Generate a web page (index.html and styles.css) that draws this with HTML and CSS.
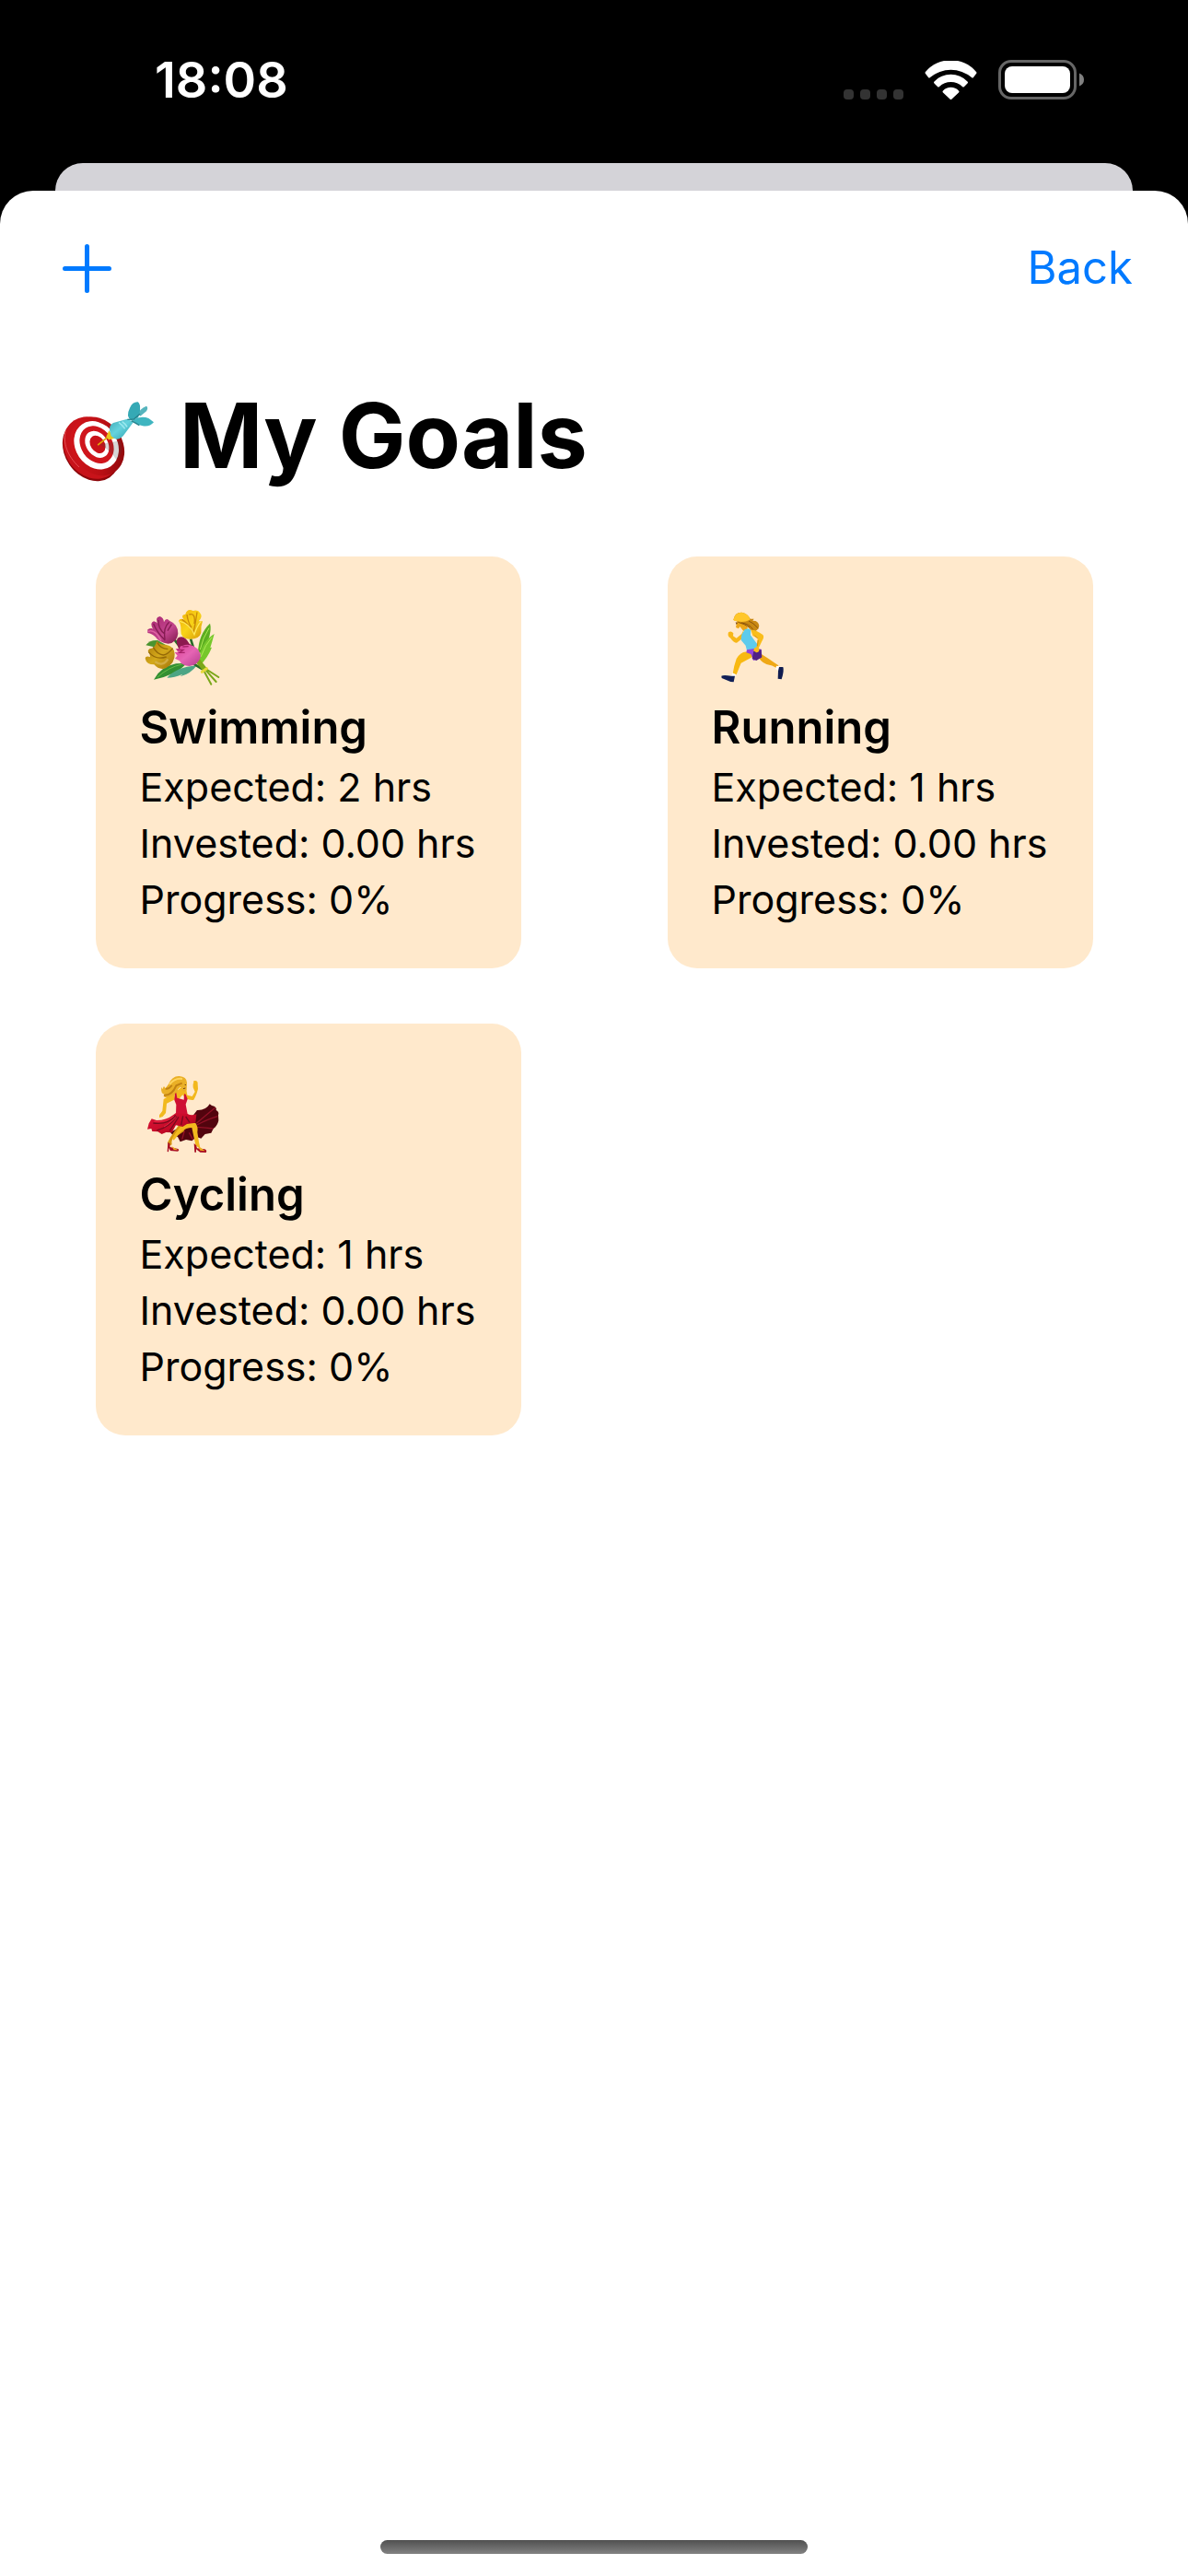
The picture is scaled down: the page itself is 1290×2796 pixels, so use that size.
FILE: index.html
```html
<!DOCTYPE html>
<html lang="en">
<head>
<meta charset="utf-8">
<meta name="viewport" content="width=device-width, initial-scale=1">
<title>My Goals</title>
<link rel="stylesheet" href="styles.css">
</head>
<body>
<div class="status-bar">
  <time class="clock">18:08</time>
  <div class="indicators">
    <div class="signal"><i></i><i></i><i></i><i></i></div>
    <svg class="wifi" viewBox="0 0 57 42" aria-hidden="true">
      <path d="M1 12A36 36 0 0 1 56 12Q57 13 56 14L53 18Q52 19 51 18A35 35 0 0 0 6 18Q5 19 4 18L1 14Q0 13 1 12Z"/>
      <path d="M10.500 22.500A25 25 0 0 1 46.500 22.500Q47.500 23.500 46.500 24.500L43 28Q42 29 41 28A18.400 18.400 0 0 0 16 28Q15 29 14 28L10.500 24.500Q9.500 23.500 10.500 22.500Z"/>
      <path d="M20 32.500A11.500 11.500 0 0 1 37 32.500Q38 33.500 37 34.500L29.500 41.500Q28.500 42.500 27.500 41.500L20 34.500Q19 33.500 20 32.500Z"/>
    </svg>
    <svg class="battery" viewBox="0 0 94 43" aria-hidden="true">
      <rect x="1.500" y="1.500" width="82" height="40" rx="12.500" fill="none" stroke="#666" stroke-width="3"/>
      <rect x="7" y="7" width="71" height="29" rx="8" fill="#fff"/>
      <path d="M88 14.500Q93 16.500 93 21.500T88 28.500Z" fill="#808080"/>
    </svg>
  </div>
</div>
<div class="backdrop"></div>
<main class="sheet">
  <nav class="toolbar">
    <button class="tool" type="button" aria-label="Add goal">
      <svg class="plus" viewBox="0 0 53 53" aria-hidden="true"><path d="M26.500 2.500V50.500M2.500 26.500H50.500"/></svg>
    </button>
    <button class="tool" type="button">Back</button>
  </nav>
  <h1 class="title">
    <svg class="target" viewBox="45 75 306 264" aria-hidden="true">
      <defs>
        <linearGradient id="rim" x1="0" y1="0" x2="1" y2="1"><stop offset="0" stop-color="#d9161c"/><stop offset=".6" stop-color="#b80f14"/><stop offset="1" stop-color="#7c0508"/></linearGradient>
        <linearGradient id="barrel" x1="0" y1="0" x2="1" y2="1"><stop offset="0" stop-color="#3fa9b5"/><stop offset=".45" stop-color="#66d3de"/><stop offset="1" stop-color="#279aa8"/></linearGradient>
      </defs>
      <ellipse cx="147" cy="235" rx="86" ry="108" transform="rotate(-34 147 235)" fill="#8d070b"/>
      <ellipse cx="150" cy="228" rx="88" ry="107" transform="rotate(-34 150 228)" fill="#c8131a"/>
      <path d="M64 172C54 210 68 254 108 291" fill="none" stroke="#ef686c" stroke-width="3" opacity=".7"/>
      <ellipse cx="167" cy="223" rx="82" ry="101" transform="rotate(-34 167 223)" fill="url(#rim)"/>
      <ellipse cx="164" cy="220" rx="68" ry="83" transform="rotate(-34 164 220)" fill="#fff"/>
      <ellipse cx="165" cy="218" rx="51" ry="65" transform="rotate(-34 165 218)" fill="#cf151c"/>
      <ellipse cx="166" cy="217" rx="35" ry="47" transform="rotate(-34 166 217)" fill="#fff"/>
      <ellipse cx="168" cy="217" rx="23" ry="31" transform="rotate(-34 168 217)" fill="#c91219"/>
      <path d="M174 217L242 205Q254 248 230 268Q208 235 174 217Z" fill="#444" opacity=".22"/>
      <path d="M170 218L209 187" stroke="#e0a90a" stroke-width="5" stroke-linecap="round"/>
      <path d="M196 192L205 172L224 197L204 202Z" fill="#e9c51a"/>
      <path d="M301 116Q304 102 327 92Q334 97 327 109L307 125Z" fill="#55b4bd"/>
      <path d="M278 138Q258 128 273 98Q282 78 299 79Q308 84 306 108L300 130Z" fill="#35a9b5"/>
      <path d="M207 171Q205 155 219 147L265 134L285 144L251 190Q231 210 212 190Z" fill="url(#barrel)"/>
      <path d="M237 146Q250 155 257 166M248 143Q259 151 264 160" fill="none" stroke="#9be8ef" stroke-width="5"/>
      <path d="M280 138Q310 122 334 132L351 145Q338 161 315 157Q292 151 280 138Z" fill="#3fb5c0"/>
      <path d="M265 136L286 135L306 118M278 140L304 155" fill="none" stroke="#26818c" stroke-width="4"/>
    </svg>
    <span>My Goals</span>
  </h1>
  <section class="goals">
    <article class="card">
      <svg class="emoji" viewBox="33 45 270 270" aria-hidden="true">
        <defs>
          <linearGradient id="gold" x1="0" y1="0" x2="1" y2="1"><stop offset="0" stop-color="#a97708"/><stop offset=".5" stop-color="#d4a91b"/><stop offset="1" stop-color="#a17208"/></linearGradient>
          <linearGradient id="yellow" x1="0" y1="0" x2="1" y2="1"><stop offset="0" stop-color="#efae0b"/><stop offset=".5" stop-color="#f8d318"/><stop offset="1" stop-color="#d89a08"/></linearGradient>
          <linearGradient id="plum" x1="0" y1="0" x2="1" y2="1"><stop offset="0" stop-color="#a5246d"/><stop offset=".6" stop-color="#c4458e"/><stop offset="1" stop-color="#7e1648"/></linearGradient>
          <linearGradient id="pink" x1="0" y1="0" x2="1" y2="1"><stop offset="0" stop-color="#d83b90"/><stop offset=".5" stop-color="#e665b4"/><stop offset="1" stop-color="#b63d8f"/></linearGradient>
        </defs>
        <path d="M52 166Q65 148 91 150L118 166L90 174Z" fill="#4b9430"/>
        <path d="M78 278Q100 236 150 226L187 224Q150 263 78 278Z" fill="#328f32"/>
        <path d="M90 270Q125 238 170 228" fill="none" stroke="#64bb45" stroke-width="3"/>
        <path d="M121 272Q150 238 218 232Q198 260 164 268L172 260Q145 272 121 272Z" fill="#4ca584"/>
        <path d="M222 190Q224 130 261 95Q270 126 238 192Z" fill="#5cad21"/>
        <path d="M226 214Q230 157 275 129Q268 155 262 174L267 173Q254 206 230 230Z" fill="#76c72b"/>
        <path d="M231 204Q246 163 267 140M229 180Q237 143 258 110" fill="none" stroke="#aceb54" stroke-width="3"/>
        <path d="M198 145L218 210L238 243M143 145L205 225L238 245" fill="none" stroke="#286b28" stroke-width="8"/>
        <path d="M214 216Q232 236 241 249L265 293M222 218Q240 240 250 250L281 285M226 213Q242 235 252 246L289 270" fill="none" stroke="#7ba719" stroke-width="6" stroke-linecap="round"/>
        <path d="M235 253L250 242" stroke="#e6d83a" stroke-width="9" stroke-linecap="round"/>
        <path d="M58 115Q72 107 76 115Q63 93 78 88Q90 91 94 101Q78 76 98 72Q110 76 111 91Q118 74 129 86Q158 98 157 128Q154 157 125 161Q95 158 83 139Q73 128 58 126Z" fill="url(#plum)"/>
        <path d="M77 96Q89 126 115 150M93 84Q91 113 115 130M128 91Q108 108 114 147M136 98L123 119" fill="none" stroke="#851c52" stroke-width="4"/>
        <path d="M60 121Q82 112 102 151" fill="none" stroke="#df64a4" stroke-width="4"/>
        <path d="M159 87Q164 76 177 83Q163 68 181 65Q187 45 206 54Q222 49 230 63Q238 73 224 88L237 88Q230 106 232 126Q226 147 194 146Q164 144 166 116Q167 98 159 87Z" fill="url(#yellow)"/>
        <path d="M170 82Q190 95 207 124Q213 100 219 58M186 66Q189 91 201 108M193 66Q215 59 210 96" fill="none" stroke="#c98a08" stroke-width="4"/>
        <path d="M162 88Q194 94 210 131Q219 102 232 88" fill="none" stroke="#ffe85c" stroke-width="4"/>
        <path d="M62 190Q55 184 65 177Q81 178 88 152Q98 165 117 164Q145 169 146 194Q148 223 117 241Q95 248 79 229Q54 229 50 209Q51 199 66 204Q66 198 62 190Z" fill="url(#gold)"/>
        <path d="M76 172Q88 195 109 198Q123 197 140 176M90 158Q101 179 124 178M61 188Q84 216 119 204" fill="none" stroke="#956907" stroke-width="4"/>
        <path d="M82 220Q108 237 124 211" fill="none" stroke="#d7b757" stroke-width="7" opacity=".7"/>
        <path d="M154 162Q148 140 168 139Q182 140 194 161L204 168L160 181Z" fill="#8d194f"/>
        <path d="M146 189L157 188L149 177L163 177Q160 169 171 168Q188 160 207 169Q231 181 230 205Q223 231 194 234Q169 233 162 217L147 209L155 200Z" fill="url(#pink)"/>
        <path d="M154 181L174 181L162 190L179 190M172 171L191 170" fill="none" stroke="#a72369" stroke-width="4"/>
      </svg>
      <h2 class="name">Swimming</h2>
      <p class="line">Expected: 2 hrs</p>
      <p class="line">Invested: 0.00 hrs</p>
      <p class="line">Progress: 0%</p>
    </article>
    <article class="card">
      <svg class="emoji" viewBox="36 45 270 270" aria-hidden="true">
        <path d="M151 188Q132 184 116 210Q107 235 104 259L116 262Q125 238 131 224L167 205L178 190Z" fill="#f8b912"/>
        <path d="M184 198Q194 221 214 228Q233 230 248 241L253 232Q236 221 222 211L194 193Z" fill="#efa816"/>
        <path d="M103 256L115 262L109 270L100 267ZM246 233L256 235L253 249L244 243Z" fill="#fff"/>
        <path d="M67 266Q74 262 99 266L111 266L107 286L97 285L68 273Z" fill="#102057"/>
        <path d="M255 237L268 237Q272 249 263 277L251 275L252 250Z" fill="#101c50"/>
        <path d="M118 88L114 108L123 112L127 105L139 120L153 111L145 91Z" fill="#eda719"/>
        <path d="M106 84Q110 59 132 59Q152 62 161 80L173 80L169 86Q188 85 190 103Q188 116 178 120L162 116L150 102L132 94L124 91L113 86Z" fill="#c98912"/>
        <path d="M106 83Q111 59 133 59Q157 63 160 83Q138 94 120 88L111 87Z" fill="#ffc72b"/>
        <path d="M121 91Q142 96 158 108M132 93Q158 96 170 115M156 87Q170 92 187 111" fill="none" stroke="#8c550b" stroke-width="3"/>
        <path d="M113 91L120 93L116 99Z" fill="#704014"/>
        <path d="M139 117L133 129L116 143L105 136L106 127Q99 118 90 124Q85 137 97 143Q107 158 117 158L135 144Z" fill="#f7b719"/>
        <path d="M143 115L154 112L163 116L162 133L184 163L181 183L150 183L146 167L131 149L133 132Z" fill="#5ecbec"/>
        <path d="M150 181L180 176L197 179L198 206L171 216L167 204L163 195L148 190Z" fill="#9244dc"/>
        <path d="M173 181L197 181L199 205L181 216L167 210Z" fill="#512184"/>
        <path d="M163 116Q181 116 202 132Q208 139 199 153L189 174Q194 189 181 190L171 184Q173 174 182 171L185 143L169 135Z" fill="#f9bd1b"/>
        <path d="M185 144L175 134M184 169L187 150" stroke="#d88d12" stroke-width="3"/>
      </svg>
      <h2 class="name">Running</h2>
      <p class="line">Expected: 1 hrs</p>
      <p class="line">Invested: 0.00 hrs</p>
      <p class="line">Progress: 0%</p>
    </article>
    <article class="card">
      <svg class="emoji" viewBox="33 51 270 270" aria-hidden="true">
        <defs>
          <linearGradient id="dress" x1="0" y1="0" x2="1" y2="1"><stop offset="0" stop-color="#dd1439"/><stop offset=".6" stop-color="#c30a27"/><stop offset="1" stop-color="#6d0715"/></linearGradient>
        </defs>
        <path d="M187 207L219 165Q248 166 260 145L267 150Q285 154 281 165Q292 171 288 181L289 199Q285 217 272 225L265 239L245 243L232 257L218 252L202 265L183 261L164 268L156 252L140 247L132 237Z" fill="#52040e"/>
        <path d="M217 208Q252 178 278 157M219 213Q254 194 286 185M219 220Q250 222 271 225M193 238L205 260M178 232L170 260" fill="none" stroke="#931126" stroke-width="4"/>
        <path d="M174 212Q184 220 175 235L144 255Q134 260 137 277L127 282L123 270Q131 253 143 237L159 214Z" fill="#d69711"/>
        <path d="M180 204L214 207Q223 219 220 237L225 269L229 287L215 282L207 246L202 222Q184 222 167 235L143 263L138 257Q157 223 180 204Z" fill="#f2b91e"/>
        <path d="M124 270L130 273L131 285L157 291Q163 296 156 299L132 297L127 288L126 301L122 300ZM209 273L216 279L219 289L244 292Q253 297 248 303L229 302L216 292L216 302L211 302Z" fill="#a80d23"/>
        <path d="M134 279L139 284L157 295L143 294ZM221 282L231 287L245 298L229 296Z" fill="#edad20"/>
        <path d="M145 110Q124 120 110 129L106 167L96 181L96 190L107 186L117 174L120 143L147 130Z" fill="#f1b91e"/>
        <path d="M165 92L184 98L187 116L203 120L212 105L206 91Q204 81 208 75Q205 68 213 69Q222 69 221 80L222 96Q216 119 208 131Q200 134 180 126L172 115L159 130L146 119L153 103Z" fill="#f2b81e"/>
        <path d="M126 80Q138 53 161 54Q185 56 186 75L185 99Q178 108 171 101L165 89L157 97Q153 117 141 116Q120 130 109 119L118 115Q98 113 103 90L107 97Q107 92 111 87L116 94Z" fill="#eab027"/>
        <path d="M116 95Q126 98 137 84M111 116Q137 118 151 85L170 77" fill="none" stroke="#c18112" stroke-width="6"/>
        <path d="M129 81Q147 59 171 63" fill="none" stroke="#ffd55f" stroke-width="6"/>
        <path d="M183 83L179 82M181 93L174 95" stroke="#754816" stroke-width="3"/>
        <path d="M147 111L151 108L154 125L176 131L177 112L182 113L188 129L182 146L188 178L150 178L151 147L145 132Z" fill="#cf1034"/>
        <path d="M150 174L188 177Q200 184 217 178L214 206L186 210L172 219L150 214L137 238L118 237L104 243L91 235L73 234L70 225L57 227L62 208L71 193L87 198Q119 198 142 180Z" fill="url(#dress)"/>
        <path d="M149 181Q124 214 76 207M153 185Q126 222 88 231M159 187L130 232M173 184L167 213M182 186L195 205" fill="none" stroke="#790a1d" stroke-width="4"/>
        <path d="M144 184Q119 206 79 202M151 187Q124 213 111 219" fill="none" stroke="#f43a55" stroke-width="2"/>
      </svg>
      <h2 class="name">Cycling</h2>
      <p class="line">Expected: 1 hrs</p>
      <p class="line">Invested: 0.00 hrs</p>
      <p class="line">Progress: 0%</p>
    </article>
  </section>
  <div class="home-indicator"></div>
</main>
</body>
</html>
```
FILE: styles.css
```css
* {
  box-sizing: border-box;
}

body {
  margin: 0;
  min-height: 100vh;
  display: flex;
  flex-direction: column;
  background: #000;
  color: #000;
  font-family: Inter, "Liberation Sans", sans-serif;
}

.status-bar {
  display: flex;
  align-items: center;
  justify-content: space-between;
  height: 177px;
  padding: 0 112px 4px 168px;
}

.clock {
  color: #fff;
  font-size: 54px;
  font-weight: 600;
  line-height: 64px;
}

.indicators {
  display: flex;
  align-items: flex-end;
}

.signal {
  display: flex;
  gap: 7px;
  margin-right: 23px;
}

.signal i {
  width: 11px;
  height: 11px;
  border-radius: 4px;
  background: #333;
}

.wifi {
  width: 57px;
  height: 42px;
  margin-right: 23px;
  fill: #fff;
}

.battery {
  width: 94px;
  height: 43px;
}

.backdrop {
  height: 30px;
  margin: 0 60px;
  border-radius: 30px 30px 0 0;
  background: #d4d3d8;
}

.sheet {
  flex: 1;
  display: flex;
  flex-direction: column;
  padding-bottom: 24px;
  border-radius: 36px 36px 0 0;
  background: #fff;
}

.toolbar {
  display: flex;
  align-items: center;
  justify-content: space-between;
  height: 168px;
  padding: 0 60px 0 68px;
}

.tool {
  display: flex;
  padding: 0;
  border: 0;
  background: none;
  color: #007aff;
  font: inherit;
  font-size: 49px;
  line-height: 60px;
}

.plus {
  width: 53px;
  height: 53px;
  fill: none;
  stroke: currentColor;
  stroke-width: 5;
  stroke-linecap: round;
}

.title {
  display: flex;
  align-items: flex-end;
  gap: 28px;
  margin: 38px 65px 0;
  font-size: 97px;
  font-weight: 700;
  line-height: 120px;
}

.target {
  width: 102px;
  height: 88px;
  margin-bottom: 10px;
}

.goals {
  display: grid;
  grid-template-columns: 1fr 1fr;
  justify-items: center;
  gap: 60px 48px;
  margin: 71px 48px 60px;
}

.card {
  min-width: 462px;
  padding: 56px 48px 44px;
  border-radius: 32px;
  background: #ffe9cc;
}

.emoji {
  display: block;
  width: 90px;
  height: 90px;
}

.name {
  margin: 10px 0 4px;
  font-size: 49px;
  font-weight: 600;
  line-height: 60px;
}

.line {
  margin: 0;
  font-size: 43px;
  line-height: 61px;
}

.home-indicator {
  width: 36%;
  height: 15px;
  margin: auto auto 0;
  border-radius: 8px;
  background: linear-gradient(#505050, #828282);
}
```
